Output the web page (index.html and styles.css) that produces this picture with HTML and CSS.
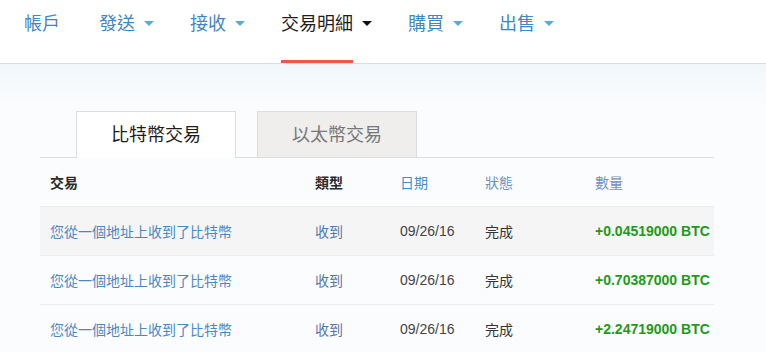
FILE: index.html
```html
<!DOCTYPE html>
<html lang="zh-Hant">
<head>
    <meta charset="UTF-8">
    <meta name="viewport" content="width=device-width, initial-scale=1.0">
    <title>交易明細</title>
    <link rel="stylesheet" href="styles.css">
</head>
<body>
    <header class="navbar">
        <ul class="menu">
            <li class="menu-item plain"><span class="label">帳戶</span></li>
            <li class="menu-item"><span class="label">發送</span><span class="caret"></span></li>
            <li class="menu-item"><span class="label">接收</span><span class="caret"></span></li>
            <li class="menu-item active"><span class="label">交易明細</span><span class="caret"></span></li>
            <li class="menu-item"><span class="label">購買</span><span class="caret"></span></li>
            <li class="menu-item"><span class="label">出售</span><span class="caret"></span></li>
        </ul>
    </header>

    <main class="page">
        <div class="content">
            <div class="tabs">
                <div class="tab current">比特幣交易</div>
                <div class="tab">以太幣交易</div>
            </div>

            <table class="tx-table">
                <colgroup>
                    <col class="c-desc">
                    <col class="c-type">
                    <col class="c-date">
                    <col class="c-status">
                    <col class="c-amount">
                </colgroup>
                <thead>
                    <tr>
                        <th class="strong">交易</th>
                        <th class="strong">類型</th>
                        <th class="sort">日期</th>
                        <th class="sort soft">狀態</th>
                        <th class="sort soft">數量</th>
                    </tr>
                </thead>
                <tbody>
                    <tr class="shade">
                        <td class="desc">您從一個地址上收到了比特幣</td>
                        <td class="type">收到</td>
                        <td class="date">09/26/16</td>
                        <td class="status">完成</td>
                        <td class="amount">+0.04519000 BTC</td>
                    </tr>
                    <tr>
                        <td class="desc">您從一個地址上收到了比特幣</td>
                        <td class="type">收到</td>
                        <td class="date">09/26/16</td>
                        <td class="status">完成</td>
                        <td class="amount">+0.70387000 BTC</td>
                    </tr>
                    <tr>
                        <td class="desc">您從一個地址上收到了比特幣</td>
                        <td class="type">收到</td>
                        <td class="date">09/26/16</td>
                        <td class="status">完成</td>
                        <td class="amount">+2.24719000 BTC</td>
                    </tr>
                </tbody>
            </table>
        </div>
    </main>
</body>
</html>
```

FILE: styles.css
```css
body {
    margin: 0;
    font-family: "Open Sans", "Noto Sans CJK TC", sans-serif;
    background: #fbfcfe;
    color: #333;
}

.navbar {
    background: #fff;
    border-bottom: 1px solid #dcdcdc;
}

.menu {
    display: flex;
    margin: 0;
    padding: 0 0 0 24px;
    list-style: none;
}

.menu-item {
    display: flex;
    align-items: flex-start;
    margin-right: 36px;
    font-size: 18px;
    color: #3f86c4;
}

.menu-item.plain {
    margin-right: 39px;
}

.label {
    display: block;
    padding: 10px 0 24px;
    line-height: 26px;
    border-bottom: 3px solid transparent;
}

.caret {
    margin: 21px 0 0 9px;
    width: 0;
    height: 0;
    border-left: 5px solid transparent;
    border-right: 5px solid transparent;
    border-top: 5px solid #5aabd2;
}

.menu-item.active {
    color: #1e1e1e;
}

.menu-item.active .label {
    border-bottom-color: #ea5a4b;
}

.menu-item.active .caret {
    border-top-color: #111;
}

.page {
    background: linear-gradient(#f1f7fb, #fbfcfe 40px);
    padding-top: 47px;
    height: 241px;
    overflow: hidden;
}

.content {
    margin-left: 40px;
    width: 674px;
}

.tabs {
    display: flex;
    gap: 21px;
    padding-left: 36px;
    border-bottom: 1px solid #dddddd;
}

.tab {
    width: 158px;
    height: 45px;
    margin-bottom: -1px;
    border: 1px solid #dcdcdc;
    border-bottom: none;
    background: #efeeed;
    color: #777;
    font-size: 18px;
    line-height: 44px;
    text-align: center;
}

.tab.current {
    height: 46px;
    background: #fff;
    color: #1c1c1c;
}

.tx-table {
    width: 100%;
    border-collapse: collapse;
    table-layout: fixed;
    font-size: 14px;
}

.c-desc { width: 265px; }
.c-type { width: 85px; }
.c-date { width: 85px; }
.c-status { width: 110px; }
.c-amount { width: 129px; }

.tx-table th,
.tx-table td {
    height: 48px;
    padding: 0 10px;
    text-align: left;
    vertical-align: middle;
    white-space: nowrap;
}

.tx-table th {
    font-weight: normal;
}

.tx-table td {
    border-top: 1px solid #ececec;
}

.strong {
    font-weight: bold !important;
    color: #2a2a2a;
}

.sort {
    color: #3f8fcc;
}

.sort.soft {
    color: #6b93bd;
}

.shade {
    background: #f5f5f5;
}

.desc {
    color: #4a88c0;
}

.type {
    color: #5577a3;
}

.date {
    font-family: "Liberation Sans", Arial, sans-serif;
    color: #444;
}

.status {
    color: #333;
}

.amount {
    font-family: "Liberation Sans", Arial, sans-serif;
    font-weight: bold;
    color: #1e9a1a;
}
```
